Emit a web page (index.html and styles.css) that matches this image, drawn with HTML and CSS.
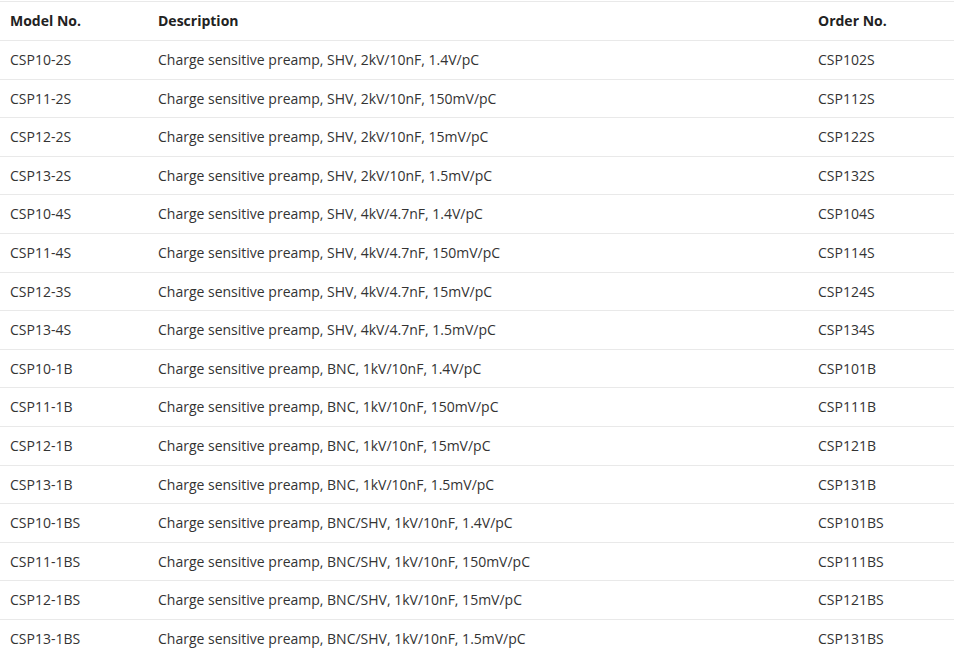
FILE: index.html
```html
<!DOCTYPE html>
<html>
<head>
<meta charset="utf-8">
<link rel="stylesheet" href="styles.css">
</head>
<body>
<table class="spec">
<thead>
<tr><th class="c-model">Model No.</th><th class="c-desc">Description</th><th class="c-order">Order No.</th></tr>
</thead>
<tbody>
<tr><td>CSP10-2S</td><td>Charge sensitive preamp, SHV, 2kV/10nF, 1.4V/pC</td><td>CSP102S</td></tr>
<tr><td>CSP11-2S</td><td>Charge sensitive preamp, SHV, 2kV/10nF, 150mV/pC</td><td>CSP112S</td></tr>
<tr><td>CSP12-2S</td><td>Charge sensitive preamp, SHV, 2kV/10nF, 15mV/pC</td><td>CSP122S</td></tr>
<tr><td>CSP13-2S</td><td>Charge sensitive preamp, SHV, 2kV/10nF, 1.5mV/pC</td><td>CSP132S</td></tr>
<tr><td>CSP10-4S</td><td>Charge sensitive preamp, SHV, 4kV/4.7nF, 1.4V/pC</td><td>CSP104S</td></tr>
<tr><td>CSP11-4S</td><td>Charge sensitive preamp, SHV, 4kV/4.7nF, 150mV/pC</td><td>CSP114S</td></tr>
<tr><td>CSP12-3S</td><td>Charge sensitive preamp, SHV, 4kV/4.7nF, 15mV/pC</td><td>CSP124S</td></tr>
<tr><td>CSP13-4S</td><td>Charge sensitive preamp, SHV, 4kV/4.7nF, 1.5mV/pC</td><td>CSP134S</td></tr>
<tr><td>CSP10-1B</td><td>Charge sensitive preamp, BNC, 1kV/10nF, 1.4V/pC</td><td>CSP101B</td></tr>
<tr><td>CSP11-1B</td><td>Charge sensitive preamp, BNC, 1kV/10nF, 150mV/pC</td><td>CSP111B</td></tr>
<tr><td>CSP12-1B</td><td>Charge sensitive preamp, BNC, 1kV/10nF, 15mV/pC</td><td>CSP121B</td></tr>
<tr><td>CSP13-1B</td><td>Charge sensitive preamp, BNC, 1kV/10nF, 1.5mV/pC</td><td>CSP131B</td></tr>
<tr><td>CSP10-1BS</td><td>Charge sensitive preamp, BNC/SHV, 1kV/10nF, 1.4V/pC</td><td>CSP101BS</td></tr>
<tr><td>CSP11-1BS</td><td>Charge sensitive preamp, BNC/SHV, 1kV/10nF, 150mV/pC</td><td>CSP111BS</td></tr>
<tr><td>CSP12-1BS</td><td>Charge sensitive preamp, BNC/SHV, 1kV/10nF, 15mV/pC</td><td>CSP121BS</td></tr>
<tr><td>CSP13-1BS</td><td>Charge sensitive preamp, BNC/SHV, 1kV/10nF, 1.5mV/pC</td><td>CSP131BS</td></tr>
</tbody>
</table>
</body>
</html>
```

FILE: styles.css
```css
html, body {
  margin: 0;
  padding: 0;
  background: #fff;
}
body {
  padding-top: 1px;
  font-family: "Open Sans", "DejaVu Sans", sans-serif;
  font-size: 14px;
  color: #333;
}
.spec {
  width: 954px;
  border-collapse: collapse;
  border-spacing: 0;
}
.spec th, .spec td {
  text-align: left;
  vertical-align: middle;
  padding: 10px 10px;
  line-height: 17.6px;
  border-top: 1px solid #e9e9e9;
}
.spec th {
  font-weight: bold;
  color: #222;
  padding-top: 10px;
  padding-bottom: 10px;
  line-height: 18px;
}
.c-model { width: 128px; }
.c-desc { width: 640px; }
.c-order { width: auto; }
```
